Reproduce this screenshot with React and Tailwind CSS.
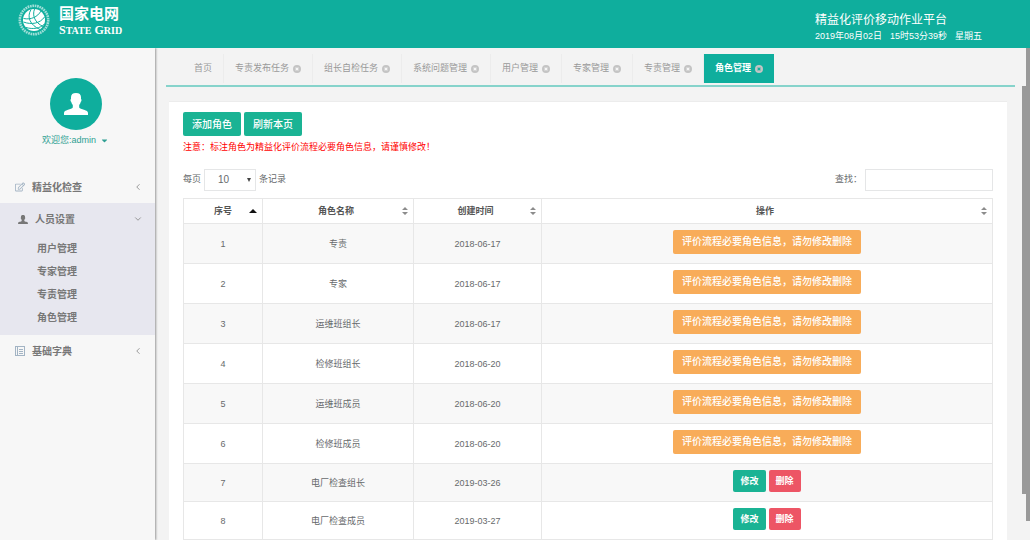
import { FaRegEdit, FaCaretDown } from "react-icons/fa";
import { ChevronDown, ChevronLeft } from "lucide-react";

const tabs = [
  { name: "首页" },
  { name: "专责发布任务", closable: true },
  { name: "组长自检任务", closable: true },
  { name: "系统问题管理", closable: true },
  { name: "用户管理", closable: true },
  { name: "专家管理", closable: true },
  { name: "专责管理", closable: true },
  { name: "角色管理", closable: true, active: true },
];

const subMenus = ["用户管理", "专家管理", "专责管理", "角色管理"];

const roles = [
  { id: 1, name: "专责", date: "2018-06-17", locked: true },
  { id: 2, name: "专家", date: "2018-06-17", locked: true },
  { id: 3, name: "运维班组长", date: "2018-06-17", locked: true },
  { id: 4, name: "检修班组长", date: "2018-06-20", locked: true },
  { id: 5, name: "运维班成员", date: "2018-06-20", locked: true },
  { id: 6, name: "检修班成员", date: "2018-06-20", locked: true },
  { id: 7, name: "电厂检查组长", date: "2019-03-26" },
  { id: 8, name: "电厂检查成员", date: "2019-03-27" },
];

function UserIcon({ className }) {
  return (
    <svg viewBox="0 0 24 22" className={className} fill="currentColor" aria-hidden="true">
      <path d="M12 0c3.400 0 5 1.600 5 4.200v1.800c.8.300.7 2.300-.3 2.900-.3 1.500-.9 2.300-1.500 2.900v2.700c.6 1 2.600 1.600 4.800 2.300 2.700.8 4 1.700 4 3.200v2H0v-2c0-1.500 1.300-2.400 4-3.200 2.200-.7 4.200-1.300 4.800-2.300v-2.700c-.6-.6-1.200-1.400-1.500-2.900-1-.6-1.100-2.600-.3-2.900V4.200C7 1.600 8.600 0 12 0z" />
    </svg>
  );
}

function BookIcon({ className }) {
  return (
    <svg viewBox="0 0 10 10" className={className} fill="none" stroke="currentColor" aria-hidden="true">
      <rect x="0.5" y="0.5" width="9" height="9" />
      <path d="M2.5 0.5v9M4 3.500h4M4 5.500h4M4 7.500h4" />
    </svg>
  );
}

function CloseIcon({ active }) {
  return (
    <svg viewBox="0 0 8 8" className="h-2 w-2" fill="none" aria-hidden="true">
      <circle cx="4" cy="4" r="4" fill="#c4c4c4" />
      <path d="M2.600 2.600l2.800 2.800M5.400 2.600l-2.800 2.800" stroke={active ? "#0fae9d" : "#f7f7f7"} strokeWidth="1.200" />
    </svg>
  );
}

function SortIcon() {
  return (
    <svg viewBox="0 0 6 8" className="h-2 w-1.5" fill="#8c8c8c" aria-hidden="true">
      <path d="M3 0l3 3H0zM3 8L0 5h6z" />
    </svg>
  );
}

function SortAscIcon() {
  return (
    <svg viewBox="0 0 8 8" className="h-2 w-2" fill="#111" aria-hidden="true">
      <path d="M4 2l4 4H0z" />
    </svg>
  );
}

function GridLogo() {
  return (
    <svg viewBox="0 0 32 32" className="h-8 w-8" fill="none" aria-hidden="true">
      <circle cx="16" cy="16" r="14.200" stroke="#fff" strokeOpacity="0.6" strokeWidth="2.600" strokeDasharray="1.700 0.700" />
      <circle cx="16" cy="16" r="11" fill="#fff" />
      <g stroke="#0fae9d" strokeWidth="1">
        <path d="M13 5.500C8.500 13 12 21 22 25.500" />
        <path d="M16.500 5c-2.500 7 .5 13.500 8.500 17.500" />
        <path d="M5.500 18c8 3 16.500 1.500 21-5" />
        <path d="M5.500 14.500c7.500 1.500 14-1.500 17.500-7.500" />
        <path d="M8 23.500c7 2 14 1 18.500-3.500" />
      </g>
    </svg>
  );
}

function Header() {
  return (
    <header className="relative z-10 flex h-12 shrink-0 items-center justify-between bg-[#0fae9d] pl-[18px] text-white">
      <div className="flex h-full items-start gap-[9px] pt-1">
        <GridLogo />
        <div>
          <div className="text-[15px] leading-5 font-bold">国家电网</div>
          <div className="font-['Liberation_Serif','Noto_Sans_CJK_SC',serif] text-[12px] leading-3 font-bold">
            S<span className="text-[10px]">TATE</span> G<span className="text-[10px]">RID</span>
          </div>
        </div>
      </div>

      <div className="w-[215px] pt-1">
        <div className="text-[12px] leading-5">精益化评价移动作业平台</div>
        <div className="flex gap-2 text-[9px] leading-3">
          <span>2019年08月02日</span>
          <span>15时53分39秒</span>
          <span>星期五</span>
        </div>
      </div>
    </header>
  );
}

function MenuItem({ icon, label, open }) {
  const Chevron = open ? ChevronDown : ChevronLeft;
  return (
    <button className="flex h-8 w-full items-center gap-[7px] pr-3 pl-[15px] text-[10px] font-bold text-[#777]">
      {icon}
      <span>{label}</span>
      <Chevron size={10} className="ml-auto text-[#888]" />
    </button>
  );
}

function Sidebar() {
  return (
    <aside className="w-[155px] shrink-0 bg-[#f7f7f7] shadow-[1px_0_2px_#999]">
      <div className="flex flex-col items-center pt-[30px] pr-1 pb-6">
        <div className="flex h-13 w-13 items-center justify-center rounded-full bg-[#0fae9d] text-white">
          <UserIcon className="h-[22px] w-6" />
        </div>
        <button className="mt-1 flex h-[13px] items-center gap-1 text-[9px] text-[#2f9f93]">
          欢迎您:admin
          <FaCaretDown size={9} />
        </button>
      </div>

      <nav>
        <MenuItem icon={<FaRegEdit size={10} className="text-[#a3b4c4]" />} label="精益化检查" />
        <div className="bg-[#e7e7ef] pb-1.5">
          <MenuItem icon={<UserIcon className="ml-[3px] h-[9px] w-[10px] text-[#777]" />} label="人员设置" open />
          <ul className="pt-0.5 text-[10px] leading-[23px] font-bold text-[#777]">
            {subMenus.map((name) => (
              <li key={name} className="pl-[37px]">
                <a href="#">{name}</a>
              </li>
            ))}
          </ul>
        </div>
        <MenuItem icon={<BookIcon className="h-[10px] w-[10px] text-[#a3b4c4]" />} label="基础字典" />
      </nav>
    </aside>
  );
}

function TabBar() {
  return (
    <div className="mr-[7px] ml-[11px] flex border-b-2 border-[#86d3cb] pt-[6px] pb-[2px] pl-[17px] text-[9px]">
      {tabs.map((tab) => (
        <button
          key={tab.name}
          className={
            tab.active
              ? "flex h-[29px] items-center gap-1 bg-[#0fae9d] px-[11px] font-bold text-white"
              : "flex h-[29px] items-center gap-1 border-r border-[#ececec] px-[11px] text-[#999]"
          }
        >
          {tab.name}
          {tab.closable && <CloseIcon active={tab.active} />}
        </button>
      ))}
    </div>
  );
}

function RoleTable() {
  const th = "relative h-[25px] border border-[#e7e7e7] text-center font-bold text-[#555]";
  const td = "border border-[#e7e7e7]";
  return (
    <table className="mt-[7px] w-full table-fixed border-collapse text-center text-[9px] leading-3">
      <thead>
        <tr>
          <th className={`${th} w-[79px]`}>
            序号
            <span className="absolute top-2 right-[5px]"><SortAscIcon /></span>
          </th>
          <th className={`${th} w-[151px] pr-1`}>
            角色名称
            <span className="absolute top-2 right-[5px]"><SortIcon /></span>
          </th>
          <th className={`${th} w-[128px] pr-1`}>
            创建时间
            <span className="absolute top-2 right-[5px]"><SortIcon /></span>
          </th>
          <th className={`${th} pr-1`}>
            操作
            <span className="absolute top-2 right-[5px]"><SortIcon /></span>
          </th>
        </tr>
      </thead>
      <tbody>
        {roles.map((role) => (
          <tr key={role.id} className={role.locked ? "h-10 odd:bg-[#f8f8f8]" : "h-[38px] odd:bg-[#f8f8f8]"}>
            <td className={td}>{role.id}</td>
            <td className={td}>{role.name}</td>
            <td className={td}>{role.date}</td>
            <td className={`${td} pb-1`}>
              {role.locked ? (
                <button className="h-6 rounded-[2px] bg-[#f8ac59] px-[9px] align-middle text-[10px] font-medium text-white">
                  评价流程必要角色信息，请勿修改删除
                </button>
              ) : (
                <div className="flex justify-center gap-[3px] font-bold text-white">
                  <button className="h-[22px] rounded-[2px] bg-[#1ab394] px-[7px]">修改</button>
                  <button className="h-[22px] rounded-[2px] bg-[#ed5565] px-[7px]">删除</button>
                </div>
              )}
            </td>
          </tr>
        ))}
      </tbody>
    </table>
  );
}

function RolePanel() {
  return (
    <section className="mt-[14px] mr-[15px] ml-[14px] border-t border-[#ececec] bg-white px-[14px] pt-[10px]">
      <div className="flex gap-[3px] text-[10px] text-white">
        <button className="h-6 rounded-[2px] bg-[#1ab394] px-[9px] font-medium">添加角色</button>
        <button className="h-6 rounded-[2px] bg-[#1ab394] px-[9px] font-medium">刷新本页</button>
      </div>
      <p className="mt-[5px] text-[9px] leading-3 text-[#f00]">
        注意：标注角色为精益化评价流程必要角色信息，请谨慎修改！
      </p>

      <div className="mt-4 flex items-start justify-between text-[9px] leading-5">
        <label className="flex gap-[3px]">
          每页
          <span className="relative">
            <select className="h-[22px] w-[52px] appearance-none border border-[#e5e6e7] bg-white pl-[13px] text-[10px]">
              <option>10</option>
              <option>25</option>
              <option>50</option>
            </select>
            <svg viewBox="0 0 4 4" className="pointer-events-none absolute top-[9px] right-[5px] h-1 w-1" fill="#444">
              <path d="M0 0h4L2 4z" />
            </svg>
          </span>
          条记录
        </label>
        <label className="flex gap-[3px]">
          查找：
          <input type="text" className="h-[22px] w-[128px] border border-[#e5e6e7] bg-white px-1" />
        </label>
      </div>

      <RoleTable />
    </section>
  );
}

export default function App() {
  return (
    <div className="flex h-screen flex-col overflow-hidden bg-[#f3f3f3] font-['Liberation_Sans','Noto_Sans_CJK_SC',sans-serif] text-[#676a6c]">
      <Header />
      <div className="relative flex min-h-0 flex-1">
        <Sidebar />
        <main className="min-w-0 flex-1 pr-2">
          <TabBar />
          <RolePanel />
        </main>
        {/* page and frame scroll thumbs */}
        <div className="absolute top-0 right-0 h-[473px] w-1 bg-[#999]" />
        <div className="absolute top-[38px] right-0 h-[408px] w-[8px] bg-[#999]" />
      </div>
    </div>
  );
}
